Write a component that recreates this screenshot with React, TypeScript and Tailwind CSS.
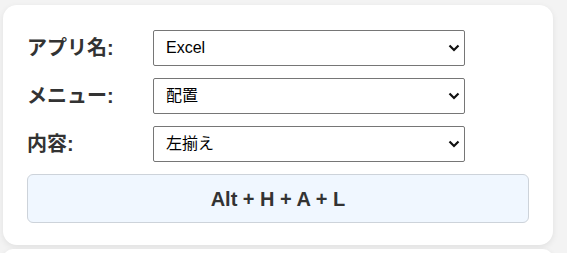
import React, { useState } from "react";

const labelFont = { fontFamily: '"Liberation Sans", "Noto Sans CJK JP", sans-serif' };

type Row = { label: string; value: string; options: string[] };

const Chevron = () => (
  <svg
    className="pointer-events-none absolute right-[5px] top-1/2 -translate-y-1/2"
    width="12"
    height="8"
    viewBox="0 0 12 8"
  >
    <path d="M1.5 1.5 L6 6 L10.5 1.5" fill="none" stroke="#111" strokeWidth="2.2" />
  </svg>
);

function SelectRow({ row }: { row: Row }) {
  const [value, setValue] = useState(row.value);
  return (
    <div className="flex items-center">
      <label className="w-[126px] text-[20px] font-bold text-[#333]">{row.label}</label>
      <div className="relative w-[312px]">
        <select
          value={value}
          onChange={(e) => setValue(e.target.value)}
          className="h-[36px] w-full appearance-none rounded-[2px] border border-[#767676] bg-white pl-[12px] text-[16px] text-black outline-none"
        >
          {row.options.map((o) => (
            <option key={o}>{o}</option>
          ))}
        </select>
        <Chevron />
      </div>
    </div>
  );
}

export default function App() {
  const rows: Row[] = [
    { label: "アプリ名:", value: "Excel", options: ["Excel", "Word", "PowerPoint"] },
    { label: "メニュー:", value: "配置", options: ["ホーム", "配置", "挿入"] },
    { label: "内容:", value: "左揃え", options: ["左揃え", "中央揃え", "右揃え"] },
  ];

  return (
    <div className="h-screen overflow-hidden bg-[#f3f3f3] pl-[3px] pt-[5px]" style={labelFont}>
      <div className="w-[550px] rounded-[14px] bg-white px-[24px] pb-[22px] pt-[25px] shadow-[0_2px_6px_rgba(0,0,0,0.08)]">
        <div className="flex flex-col gap-[12px]">
          {rows.map((r) => (
            <SelectRow key={r.label} row={r} />
          ))}
        </div>
        <div className="mt-[12px] flex h-[49px] items-center justify-center rounded-[6px] border border-[#cdd3da] bg-[#f0f7ff] text-[20px] font-bold text-[#333]">
          Alt + H + A + L
        </div>
      </div>
      <div className="mt-[4px] h-[20px] w-[550px] rounded-[14px] bg-white shadow-[0_2px_6px_rgba(0,0,0,0.08)]" />
    </div>
  );
}
